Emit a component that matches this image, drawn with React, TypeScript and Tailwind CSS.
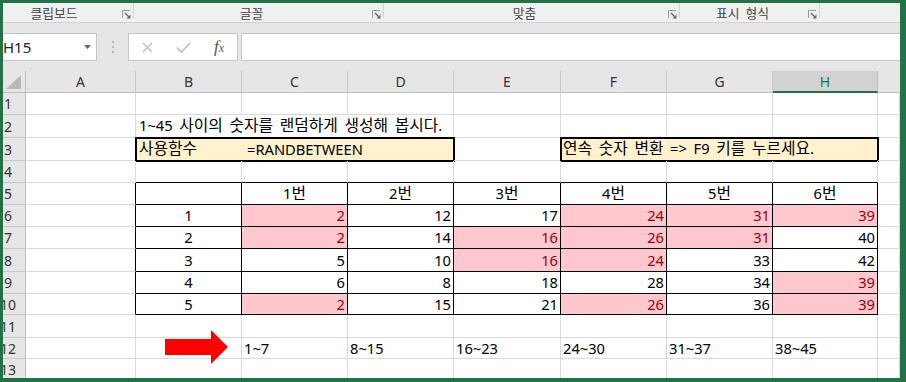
import React from "react";

const CELL_FONT = "font-['Noto_Sans','Noto_Sans_CJK_KR',sans-serif]";
const COL_W = ["w-[110px]", "w-[106px]", "w-[106px]", "w-[106px]", "w-[107px]", "w-[106px]", "w-[106px]", "w-[105px]"];
const ROW_H = ["h-[22px]", "h-[23px]", "h-[23px]", "h-[22px]", "h-[22px]", "h-[22px]", "h-[22px]", "h-[23px]", "h-[22px]", "h-[21px]", "h-[23px]", "h-[21px]", "h-[22px]"];
const LETTERS = ["A", "B", "C", "D", "E", "F", "G", "H"];

// [value, highlighted]
const PICKS: [number, boolean][][] = [
  [[2, true], [12, false], [17, false], [24, true], [31, true], [39, true]],
  [[2, true], [14, false], [16, true], [26, true], [31, true], [40, false]],
  [[5, false], [10, false], [16, true], [24, true], [33, false], [42, false]],
  [[6, false], [8, false], [18, false], [28, false], [34, false], [39, true]],
  [[2, true], [15, false], [21, false], [26, true], [36, false], [39, true]],
];
const RANGES = ["1~7", "8~15", "16~23", "24~30", "31~37", "38~45"];

// hangul runs get a slightly bigger size so they take the width Malgun Gothic gives them
function Ko({ text }: { text: string }) {
  return (
    <span className="whitespace-pre [word-spacing:2.8px]">
      {text.split(/([가-힣]+)/).map((part, i) =>
        /[가-힣]/.test(part) ? (
          <span key={i} className="text-[15.8px]">
            {part}
          </span>
        ) : (
          part
        )
      )}
    </span>
  );
}

function Launcher() {
  return (
    <svg width="9" height="9" viewBox="0 0 9 9">
      <path d="M0.5 8V0.5H8" fill="none" stroke="#9a9a9a" />
      <path d="M3 3L7 7" stroke="#666" strokeWidth="1.2" />
      <path d="M8.5 4.5V8.5H4.5Z" fill="#666" />
    </svg>
  );
}

function Group({ label, width, shift = "" }: { label: string; width: string; shift?: string }) {
  return (
    <div className={`flex ${width} shrink-0`}>
      <div className={`flex flex-1 items-center justify-center whitespace-pre [word-spacing:3px] ${shift}`}>{label}</div>
      <div className="flex w-[14px] items-center justify-center pt-[3px]">
        <Launcher />
      </div>
      <div className="h-[15px] w-px bg-[#d4d4d4]" />
    </div>
  );
}

function Cell({ row, col, className = "", children }: { row: number; col: number; className?: string; children?: React.ReactNode }) {
  const tableRow = row >= 5 && row <= 10;
  const right = tableRow && col <= 7 ? "border-r-black" : "border-r-[#dadada]";
  const bottom = row >= 4 && row <= 10 && col >= 1 && col <= 7 ? "border-b-black" : "border-b-[#dadada]";
  const width = col === 8 ? "flex-1" : COL_W[col];
  return <div className={`flex shrink-0 items-center border-r border-b ${right} ${bottom} ${width} ${className}`}>{children}</div>;
}

function Row({ n, children }: { n: number; children?: React.ReactNode }) {
  return (
    <div className={`flex shrink-0 ${ROW_H[n - 1]}`}>
      <div className="flex w-[23px] shrink-0 items-center overflow-hidden border-r border-b border-r-[#bdbdbd] border-b-[#c8c8c8] bg-[#e6e6e6] text-[14px] text-[#333]">
        <div className="flex w-[10px] justify-center">
          <span>{n}</span>
        </div>
      </div>
      {children}
    </div>
  );
}

function Blank({ n }: { n: number }) {
  return (
    <Row n={n}>
      {[0, 1, 2, 3, 4, 5, 6, 7, 8].map((c) => <Cell key={c} row={n} col={c} />)}
    </Row>
  );
}

export default function App() {
  return (
    <div className="flex h-[382px] w-[906px] flex-col bg-[#217346] pt-[3px] pr-[6px] pb-[4px] pl-[3px]">
      <div className={`flex flex-1 flex-col overflow-hidden bg-white ${CELL_FONT}`}>
        {/* ribbon group captions */}
        <div className="flex h-[19px] shrink-0 bg-[#f0f0f0] font-['Noto_Sans_CJK_KR',sans-serif] text-[12.8px] text-[#444]">
          <Group label="클립보드" width="w-[131px]" shift="pr-[14px]" />
          <Group label="글꼴" width="w-[250px]" />
          <Group label="맞춤" width="w-[296px]" />
          <Group label="표시 형식" width="w-[140px]" />
          <div className="flex-1" />
        </div>
        <div className="h-[11px] shrink-0 border-t border-[#d2d2d2] bg-[#e6e6e6]" />

        {/* formula bar */}
        <div className="flex h-[28px] shrink-0 bg-[#e6e6e6]">
          <div className="flex w-[94px] shrink-0 items-center justify-between border border-l-0 border-[#c6c6c6] bg-white pr-[5px]">
            <span className="font-['Noto_Sans',sans-serif] text-[15px] text-[#222]">H15</span>
            <svg width="7" height="4" viewBox="0 0 7 4">
              <path d="M0 0H7L3.5 4Z" fill="#666" />
            </svg>
          </div>
          <div className="flex w-[31px] shrink-0 items-center justify-center">
            <svg width="2" height="12" viewBox="0 0 2 12">
              <rect x="0" y="0" width="2" height="2" fill="#b5b5b5" />
              <rect x="0" y="5" width="2" height="2" fill="#b5b5b5" />
              <rect x="0" y="10" width="2" height="2" fill="#b5b5b5" />
            </svg>
          </div>
          <div className="flex w-[110px] shrink-0 items-center border border-[#c6c6c6] bg-white">
            <div className="flex w-[36px] justify-center">
              <svg width="11" height="11" viewBox="0 0 11 11">
                <path d="M1 1L10 10M10 1L1 10" stroke="#bdbdbd" strokeWidth="1.4" />
              </svg>
            </div>
            <div className="flex w-[36px] justify-center">
              <svg width="15" height="11" viewBox="0 0 15 11">
                <path d="M1 5.5L5.5 10L14 1" fill="none" stroke="#bdbdbd" strokeWidth="1.6" />
              </svg>
            </div>
            <div className="flex w-[36px] justify-center font-['Liberation_Serif',serif] text-[17px] italic text-[#555]">
              <span>f</span>
              <span className="mt-[5px] text-[12px]">x</span>
            </div>
          </div>
          <div className="ml-[3px] flex-1 border border-r-0 border-[#c6c6c6] bg-white" />
        </div>
        <div className="h-[10px] shrink-0 bg-[#e6e6e6]" />

        {/* column headers */}
        <div className="flex h-[22px] shrink-0 text-[14px] text-[#333]">
          <div className="flex w-[23px] shrink-0 items-end justify-end border-r border-b border-[#bdbdbd] bg-[#e6e6e6] pr-[4px] pb-[3px]">
            <svg width="15" height="14" viewBox="0 0 15 14">
              <path d="M15 0V14H0Z" fill="#b9b9b9" />
            </svg>
          </div>
          {LETTERS.map((l, i) =>
            l === "H" ? (
              <div key={l} className={`flex shrink-0 items-center justify-center border-r border-b-2 border-r-[#bdbdbd] border-b-[#217346] bg-[#d2d2d2] text-[#217346] ${COL_W[i]}`}>
                {l}
              </div>
            ) : (
              <div key={l} className={`flex shrink-0 items-center justify-center border-r border-b border-r-[#c8c8c8] border-b-[#bdbdbd] bg-[#e6e6e6] ${COL_W[i]}`}>
                {l}
              </div>
            )
          )}
          <div className="flex-1 border-b border-[#bdbdbd] bg-[#e6e6e6]" />
        </div>

        {/* sheet body */}
        <div className="text-[14.7px] text-black">
          <Blank n={1} />

          <Row n={2}>
            <Cell row={2} col={0} />
            <div className="flex w-[318px] shrink-0 items-center border-r border-b border-[#dadada] pl-[3px] whitespace-nowrap">
              <Ko text="1~45 사이의 숫자를 랜덤하게 생성해 봅시다." />
            </div>
            {[4, 5, 6, 7, 8].map((c) => <Cell key={c} row={2} col={c} />)}
          </Row>

          <Row n={3}>
            <Cell row={3} col={0} />
            <div className="flex w-[318px] shrink-0 items-center border-r border-b border-[#dadada] bg-[#fff2cc] whitespace-nowrap outline-2 -outline-offset-1 outline-black">
              <span className="w-[106px] pl-[3px]">
                <Ko text="사용함수" />
              </span>
              <span className="pl-[5px]">=RANDBETWEEN</span>
            </div>
            <Cell row={3} col={4} />
            <div className="flex w-[317px] shrink-0 items-center border-r border-b border-[#dadada] bg-[#fff2cc] pl-[2px] whitespace-nowrap outline-2 -outline-offset-1 outline-black">
              <Ko text="연속 숫자 변환 => F9 키를 누르세요." />
            </div>
            <Cell row={3} col={8} />
          </Row>

          <Blank n={4} />

          <Row n={5}>
            <Cell row={5} col={0} />
            <Cell row={5} col={1} />
            {[1, 2, 3, 4, 5, 6].map((k) => (
              <Cell key={k} row={5} col={k + 1} className="justify-center">
                <Ko text={`${k}번`} />
              </Cell>
            ))}
            <Cell row={5} col={8} />
          </Row>

          {PICKS.map((picks, i) => (
            <Row key={i} n={i + 6}>
              <Cell row={i + 6} col={0} />
              <Cell row={i + 6} col={1} className="justify-center">
                {i + 1}
              </Cell>
              {picks.map(([v, hit], j) => (
                <Cell key={j} row={i + 6} col={j + 2} className={`justify-end pr-[2px] ${hit ? "bg-[#ffc7ce] text-[#9c0006]" : ""}`}>
                  {v}
                </Cell>
              ))}
              <Cell row={i + 6} col={8} />
            </Row>
          ))}

          <Blank n={11} />

          <Row n={12}>
            <Cell row={12} col={0} />
            <Cell row={12} col={1} className="relative">
              <svg className="absolute top-[-8px] left-[29px]" width="63" height="34" viewBox="0 0 63 34">
                <path d="M0 9H46V0L63 17L46 34V25H0Z" fill="#ff0000" />
              </svg>
            </Cell>
            {RANGES.map((r, j) => (
              <Cell key={r} row={12} col={j + 2} className="pl-[2px]">
                {r}
              </Cell>
            ))}
            <Cell row={12} col={8} />
          </Row>

          <Blank n={13} />
        </div>
      </div>
    </div>
  );
}
